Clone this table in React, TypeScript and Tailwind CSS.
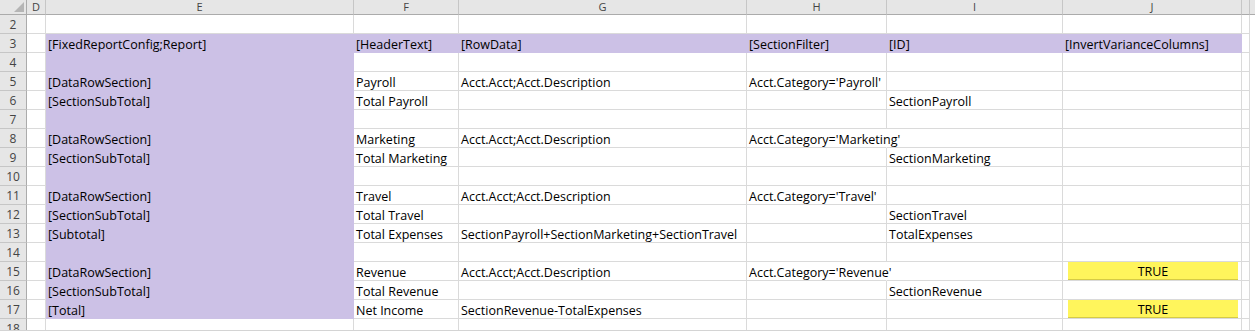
import React from 'react';

type Row = {
  n: number;
  cells?: Record<string, string>;
  purpleRow?: boolean;
  purpleE?: boolean;
  yellowJ?: boolean;
  spill?: string;
};

const cols = ['D', 'E', 'F', 'G', 'H', 'I', 'J', 'K'];

const rows: Row[] = [
  { n: 2 },
  {
    n: 3,
    purpleRow: true,
    cells: {
      E: '[FixedReportConfig;Report]',
      F: '[HeaderText]',
      G: '[RowData]',
      H: '[SectionFilter]',
      I: '[ID]',
      J: '[InvertVarianceColumns]',
    },
  },
  { n: 4, purpleE: true },
  { n: 5, purpleE: true, cells: { E: '[DataRowSection]', F: 'Payroll', G: 'Acct.Acct;Acct.Description', H: "Acct.Category='Payroll'" } },
  { n: 6, purpleE: true, cells: { E: '[SectionSubTotal]', F: 'Total Payroll', I: 'SectionPayroll' } },
  { n: 7, purpleE: true },
  {
    n: 8,
    purpleE: true,
    spill: 'H',
    cells: { E: '[DataRowSection]', F: 'Marketing', G: 'Acct.Acct;Acct.Description', H: "Acct.Category='Marketing'" },
  },
  { n: 9, purpleE: true, cells: { E: '[SectionSubTotal]', F: 'Total Marketing', I: 'SectionMarketing' } },
  { n: 10, purpleE: true },
  { n: 11, purpleE: true, cells: { E: '[DataRowSection]', F: 'Travel', G: 'Acct.Acct;Acct.Description', H: "Acct.Category='Travel'" } },
  { n: 12, purpleE: true, cells: { E: '[SectionSubTotal]', F: 'Total Travel', I: 'SectionTravel' } },
  {
    n: 13,
    purpleE: true,
    cells: { E: '[Subtotal]', F: 'Total Expenses', G: 'SectionPayroll+SectionMarketing+SectionTravel', I: 'TotalExpenses' },
  },
  { n: 14, purpleE: true },
  {
    n: 15,
    purpleE: true,
    yellowJ: true,
    spill: 'H',
    cells: { E: '[DataRowSection]', F: 'Revenue', G: 'Acct.Acct;Acct.Description', H: "Acct.Category='Revenue'" },
  },
  { n: 16, purpleE: true, cells: { E: '[SectionSubTotal]', F: 'Total Revenue', I: 'SectionRevenue' } },
  { n: 17, purpleE: true, yellowJ: true, cells: { E: '[Total]', F: 'Net Income', G: 'SectionRevenue-TotalExpenses' } },
  { n: 18 },
];

const grid = 'grid grid-cols-[27px_19px_308px_105px_288px_140px_176px_179px_8px_1fr]';

function Cell({ row, col }: { row: Row; col: string }) {
  const text = row.cells?.[col];
  const purple = (row.purpleRow && col !== 'D' && col !== 'K') || (row.purpleE && col === 'E');
  const yellow = row.yellowJ && col === 'J';
  const spill = row.spill === col;
  return (
    <div
      className={
        'relative h-[19px] whitespace-nowrap border-b border-r pl-[2px] pt-[2px] leading-[17px] ' +
        (purple ? 'border-[#ccc1e6] bg-[#ccc1e6]' : 'border-[#dadada] bg-white') +
        (spill ? ' border-r-white' : '')
      }
    >
      {yellow ? (
        <div className="absolute inset-y-0 left-[5px] right-[3px] flex items-center justify-center border-b border-[#d6cb45] bg-[#fff55c] pt-[1px]">
          TRUE
        </div>
      ) : (
        <span className="relative z-10">{text}</span>
      )}
    </div>
  );
}

export default function App() {
  return (
    <div className="h-[334px] w-[1255px] bg-white font-['Open_Sans',sans-serif] text-[12.5px] text-black">
      <div className="h-[331px] overflow-hidden border-b border-[#d4d4d4]">
        <div className={grid + ' h-[15px] bg-[#e6e6e6] text-[11px] leading-[14px] text-[#444]'}>
          <div className="relative border-b border-r border-[#ababab]">
            <svg className="absolute bottom-[2px] right-[2px]" width="10" height="10" viewBox="0 0 10 10">
              <polygon points="10,0 10,10 0,10" fill="#b5b5b5" />
            </svg>
          </div>
          {cols.map((c) => (
            <div key={c} className="border-b border-r border-[#ababab] border-r-[#c6c6c6] text-center">
              {c === 'K' ? '' : c}
            </div>
          ))}
          <div className="border-b border-[#ababab]" />
        </div>
        {rows.map((row) => (
          <div key={row.n} className={grid}>
            <div className="h-[19px] border-b border-r border-[#c6c6c6] border-r-[#ababab] bg-[#e6e6e6] pt-[1px] text-center text-[12px] leading-[18px] text-[#444]">
              {row.n}
            </div>
            {cols.map((c) => (
              <Cell key={c} row={row} col={c} />
            ))}
            <div className="h-[19px] bg-white" />
          </div>
        ))}
      </div>
    </div>
  );
}
